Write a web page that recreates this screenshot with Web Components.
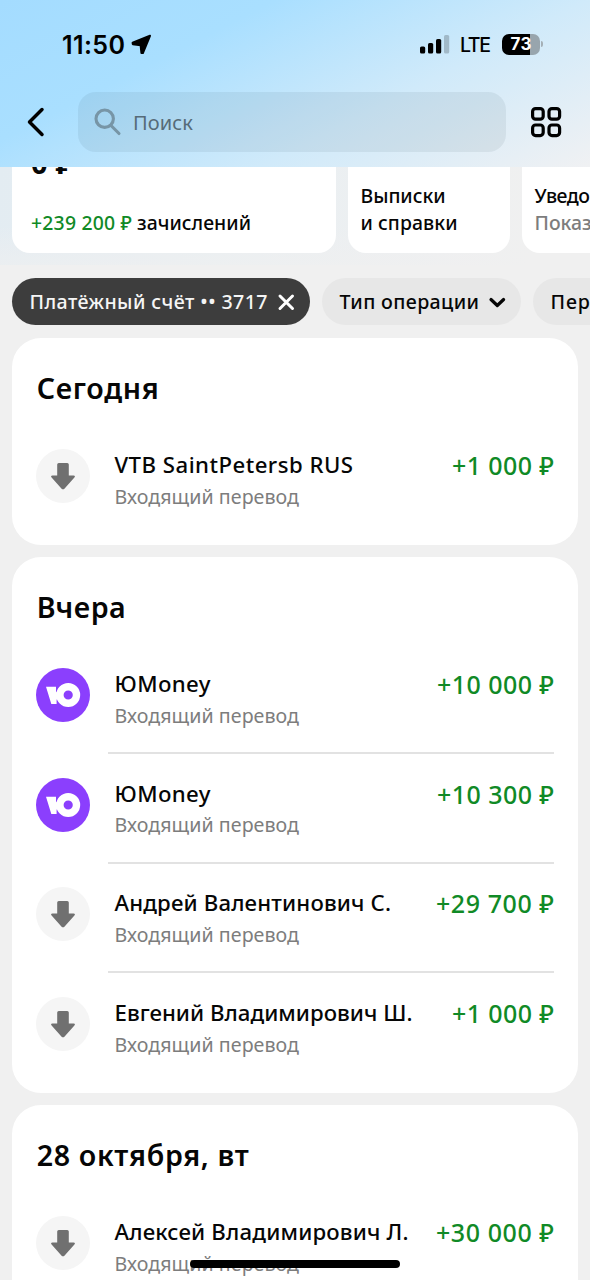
<!DOCTYPE html>
<html lang="ru">
<head>
<meta charset="utf-8">
<title>История операций</title>
<style>
html,body{margin:0;height:1280px;overflow:hidden}
body{font-family:"Noto Sans","Open Sans",sans-serif;color:#060606;background:#f0f0f0}
</style>
</head>
<body>
<bank-history></bank-history>
<script>
const define = (name, html, setup) => {
  const t = document.createElement('template');
  t.innerHTML = html;
  customElements.define(name, class extends HTMLElement {
    connectedCallback() {
      if (this.shadowRoot) return;
      this.attachShadow({mode: 'open'}).append(t.content.cloneNode(true));
      if (setup) setup.call(this, this.shadowRoot);
    }
  });
};

// A single line whose tracking is adjusted to occupy the width given in "w".
define('track-text', `<style>:host{display:block;white-space:pre;width:max-content}span{display:inline-block}</style><span><slot></slot></span>`, function (root) {
  const s = root.querySelector('span');
  const n = [...this.textContent].length;
  const w = +this.getAttribute('w');
  if (w && n > 1) {
    const gap = (w - s.getBoundingClientRect().width) / (n - 1);
    s.style.letterSpacing = gap.toFixed(3) + 'px';
    s.style.marginRight = (-gap).toFixed(3) + 'px';
  }
});

define('status-bar', `<style>
:host{display:flex;align-items:center;height:88px;padding:0 47px 0 62px;box-sizing:border-box;font-family:Inter,sans-serif;color:#000}
svg{display:block;flex:none}
.time{font-size:25px;font-weight:600;line-height:30px;margin-top:1px}
.nav{margin-left:6px}.bars{margin-left:auto}
.lte{font-size:19.5px;font-weight:500;line-height:24px;margin:2px 0 0 10px}
.bat{display:flex;align-items:center;margin-left:11px}
.level{width:38px;height:21px;border-radius:7px;background:linear-gradient(90deg,#000 28px,#98a5ad 28px);color:#fff;font-size:17px;font-weight:700;line-height:21px;display:flex;justify-content:center}
.nub{width:2px;height:6px;border-radius:0 3px 3px 0;background:#a4afb6;margin-left:1px}
</style>
<track-text class="time" w="63">11:50</track-text>
<svg class="nav" width="21" height="21" viewBox="0 0 21 21" stroke="#000" stroke-width="2" stroke-linejoin="round"><path d="M19 1.8 1.6 8.8 1.8 10.2 9.6 11.2 10.4 19 11.9 19.1Z"/></svg>
<svg class="bars" width="30" height="20" viewBox="0 0 30 20"><rect x="0" y="12.5" width="5.2" height="7" rx="1.6"/><rect x="8" y="9" width="5.2" height="10.5" rx="1.6"/><rect x="16" y="5" width="5.2" height="14.5" rx="1.6"/><rect x="24" y="1" width="5.2" height="18.5" rx="1.6" opacity=".2"/></svg>
<track-text class="lte" w="31">LTE</track-text>
<div class="bat"><div class="level"><track-text w="21">73</track-text></div><div class="nub"></div></div>`);

define('search-bar', `<style>
:host{display:flex;align-items:center;height:60px;margin-top:4px;padding:0 27px 0 26px}
svg{display:block;flex:none}
.field{display:flex;align-items:center;width:428px;height:60px;box-sizing:border-box;margin:0 24px 0 32px;padding-left:16px;border-radius:18px;background:rgba(30,50,65,.075);color:#566b78;font-size:20px;line-height:28px}
track-text{margin:2px 0 0 11px}
</style>
<svg width="20" height="30" viewBox="0 0 20 30" fill="none" stroke="#000" stroke-width="3.5" stroke-linecap="round" stroke-linejoin="round"><path d="M16 2.5 3.5 15 16 27.5"/></svg>
<div class="field"><svg width="28" height="28" viewBox="0 0 28 28" fill="none" stroke="#7795a6" stroke-width="3.1" stroke-linecap="round"><circle cx="10.7" cy="10.7" r="8.7"/><path d="m17 17.5 8 8"/></svg><track-text w="60">Поиск</track-text></div>
<svg width="32" height="32" viewBox="0 0 32 32" fill="none" stroke="#000" stroke-width="3.2"><rect x="2.6" y="2.6" width="10.6" height="10.6" rx="3"/><rect x="19" y="2.6" width="10.6" height="10.6" rx="3"/><rect x="2.6" y="19" width="10.6" height="10.6" rx="3"/><rect x="19" y="19" width="10.6" height="10.6" rx="3"/></svg>`);

define('summary-strip', `<style>
:host{display:flex;flex:none;gap:12px;height:98px;padding-left:12px;overflow:hidden;align-items:flex-start;background:linear-gradient(180deg,transparent 60%,rgba(240,240,240,.6)),linear-gradient(100deg,#e3ecf2 0,#eaeff2 45%,#f0f0f0 90%);font-size:19.4px;line-height:27px;font-weight:500}
.card{flex:none;box-sizing:border-box;width:162px;height:86px;background:#fff;border-radius:0 0 18px 18px;padding:15px 0 0 12.5px}
.wide{width:324px;padding:0 0 0 19px}
.total{font-size:29px;line-height:40px;font-weight:700;margin-top:-24px}
.line{display:flex;gap:5px;margin-top:26px}
.g{color:#108a26}.m{color:#7d7d7d}
</style>
<div class="card wide"><track-text class="total" w="42">0 ₽</track-text><div class="line"><track-text class="g" w="101">+239 200 ₽</track-text><track-text w="114">зачислений</track-text></div></div>
<div class="card"><track-text w="85">Выписки</track-text><track-text w="97">и справки</track-text></div>
<div class="card"><track-text w="126">Уведомления</track-text><track-text class="m" w="88">Показать</track-text></div>`);

define('filter-chip', `<style>
:host{display:flex;flex:none;align-items:center;box-sizing:border-box;height:47px;border-radius:24px;padding-left:17.5px;background:#e7e7e7;font-size:19.6px;line-height:47px;font-weight:500}
:host([active]){background:#3d3d3d;color:#f5f5f5}
</style><slot></slot>`);

define('filter-row', `<style>
:host{display:flex;flex:none;gap:12px;padding:13px 0 0 12px;height:60px;box-sizing:border-box;overflow:hidden}
svg{display:block;flex:none}
.a{width:298px}.b{width:199px}.c{width:160px}
.x{margin-left:9px}.v{margin:2px 0 0 9px}
</style>
<filter-chip active class="a"><track-text w="238">Платёжный счёт •• 3717</track-text><svg class="x" width="18" height="18" viewBox="0 0 18 18" stroke="#fff" stroke-width="3" stroke-linecap="round"><path d="m3 3 12.5 12.5M15.5 3 3 15.5"/></svg></filter-chip>
<filter-chip class="b"><track-text w="139.5">Тип операции</track-text><svg class="v" width="18" height="14" viewBox="0 0 18 14" fill="none" stroke="#060606" stroke-width="3.2" stroke-linecap="round" stroke-linejoin="round"><path d="m3 3.5 6.3 6 6.3-6"/></svg></filter-chip>
<filter-chip class="c"><track-text w="78">Период</track-text></filter-chip>`);

const icons = {
  arrow: '<circle cx="27" cy="27" r="27" fill="#f5f5f5"/><path d="M22.8 14h8.4q1.6 0 1.6 1.6v10.8h4.8q2.2.4.8 2l-10 11.3q-1.4 1.3-2.8 0l-10-11.3q-1.4-1.6.8-2h4.8V15.6q0-1.6 1.6-1.6Z" fill="#707070"/>',
  umoney: '<circle cx="27" cy="27" r="27" fill="#8b3ffd"/><path d="M10 18.8h10v4.6l1 1.2h4v6h-3.4l-1 1.2V36h-5.3Z" fill="#fff"/><circle cx="32.2" cy="27" r="8.3" fill="none" stroke="#fff" stroke-width="7.4"/>'
};

define('operation-row', `<style>
:host{display:grid;grid-template-columns:54px 1fr auto;grid-template-rows:84px 2px;height:109.67px;box-sizing:border-box;padding:0 24px;align-items:start;align-content:start}
:host([last]){height:96px}
svg{display:block}
.body{padding-left:24.5px}
.name{font-size:22.2px;line-height:30px;margin-top:1px;font-weight:500}
.sub{font-size:19.6px;line-height:28px;margin-top:2.7px;color:#7d7d7d}
.amount{font-size:25px;line-height:32px;color:#108a26;font-weight:500}
.rule{grid-column:1/-1;height:2px;margin-left:72px;background:#e2e2e2}
:host([last]) .rule{display:none}
</style>
<svg width="54" height="54" viewBox="0 0 54 54"></svg>
<div class="body"></div><div class="value"></div><div class="rule"></div>`, function (root) {
  const a = n => this.getAttribute(n);
  root.querySelector('svg').innerHTML = icons[a('icon')];
  const add = (box, cls, text, w) => {
    const e = document.createElement('track-text');
    e.className = cls; e.textContent = text; e.setAttribute('w', w);
    root.querySelector(box).append(e);
  };
  add('.body', 'name', a('name'), a('nw'));
  add('.body', 'sub', 'Входящий перевод', 184.5);
  add('.value', 'amount', a('amount'), a('aw'));
});

define('day-card', `<style>
:host{display:block;flex:none;width:566px;margin-left:12px;background:#fff;border-radius:29px;overflow:hidden;padding-top:30px;box-sizing:border-box}
.h{padding-left:24.7px;height:81px;font-size:28.6px;line-height:40px;font-weight:600}
</style><div class="h"><slot name="title"></slot></div><slot></slot>`);

define('bank-history', `<style>
:host{display:flex;flex-direction:column;width:590px;height:1280px;overflow:hidden;position:relative}
header{flex:none;height:167px;background:linear-gradient(153deg,#a4dcff 0,#a9dfff 30%,#d0eafa 64%,#f0f1f3 100%)}
main{display:flex;flex-direction:column;gap:12px;padding-top:13px;overflow:hidden}
.home{position:absolute;left:190px;top:1260px;width:210px;height:8px;border-radius:4px;background:#000}
</style>
<header><status-bar></status-bar><search-bar></search-bar></header>
<summary-strip></summary-strip>
<filter-row></filter-row>
<main>
<day-card><track-text slot="title" w="122">Сегодня</track-text>
<operation-row last icon="arrow" name="VTB SaintPetersb RUS" nw="238.5" amount="+1 000 ₽" aw="102"></operation-row></day-card>
<day-card><track-text slot="title" w="89">Вчера</track-text>
<operation-row icon="umoney" name="ЮMoney" nw="96" amount="+10 000 ₽" aw="117"></operation-row>
<operation-row icon="umoney" name="ЮMoney" nw="96" amount="+10 300 ₽" aw="117"></operation-row>
<operation-row icon="arrow" name="Андрей Валентинович С." nw="276.5" amount="+29 700 ₽" aw="118"></operation-row>
<operation-row last icon="arrow" name="Евгений Владимирович Ш." nw="298" amount="+1 000 ₽" aw="102"></operation-row></day-card>
<day-card><track-text slot="title" w="212">28 октября, вт</track-text>
<operation-row last icon="arrow" name="Алексей Владимирович Л." nw="294" amount="+30 000 ₽" aw="118"></operation-row></day-card>
</main>
<div class="home"></div>`);
</script>
</body>
</html>
